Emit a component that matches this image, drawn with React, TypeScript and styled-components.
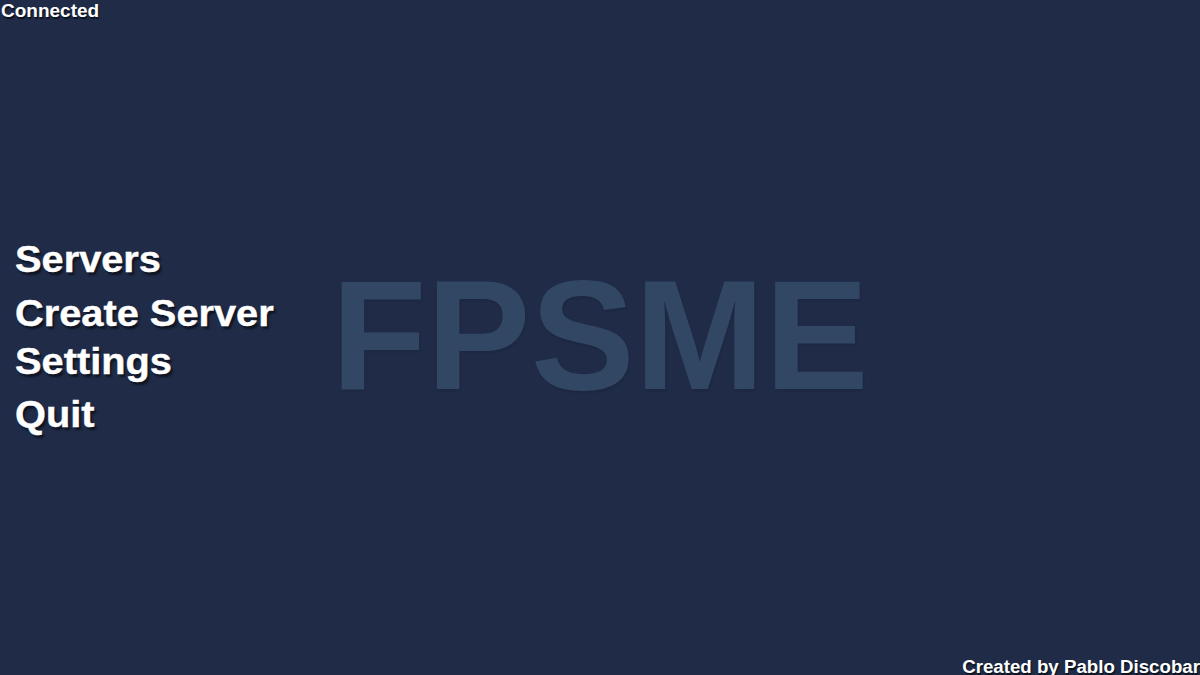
import React from "react";
import styled, { createGlobalStyle } from "styled-components";

const GlobalStyle = createGlobalStyle`
  html, body {
    margin: 0;
    padding: 0;
    background: #1f2b47;
    overflow: hidden;
  }
`;

const Screen = styled.div`
  width: 1200px;
  height: 675px;
  background: #1f2b47;
  display: grid;
  grid-template-rows: 22px 1fr 22px;
  font-family: "Liberation Sans", Arial, sans-serif;
  font-weight: bold;
  color: #ffffff;
`;

const Status = styled.div`
  font-size: 19px;
  line-height: 22px;
  padding-left: 1px;
  text-shadow: 1px 2px 1px rgba(0, 0, 0, 0.6);
`;

const Middle = styled.div`
  display: grid;
  grid-template-columns: 1fr auto 1fr;
  align-items: center;
`;

const Menu = styled.nav`
  display: flex;
  flex-direction: column;
  align-items: flex-start;
  padding-left: 15px;
`;

const MenuItem = styled.div<{ $gap: number }>`
  font-size: 37px;
  line-height: 48px;
  margin-top: ${(p) => p.$gap}px;
  white-space: nowrap;
  cursor: pointer;
  transform: scaleX(1.075);
  transform-origin: left center;
  -webkit-text-stroke: 0.4px #ffffff;
  text-shadow: 2px 3px 2px rgba(0, 0, 0, 0.55);
`;

const Title = styled.h1`
  margin: 0;
  padding-bottom: 6px;
  font-size: 156px;
  line-height: 1;
  color: #324763;
  text-shadow: 1px 2px 2px rgba(0, 0, 0, 0.08);
`;

const Footer = styled.div`
  display: flex;
  justify-content: flex-end;
  align-items: flex-end;
`;

const Credit = styled.div`
  font-size: 18.7px;
  line-height: 17px;
  text-shadow: 1px 2px 1px rgba(0, 0, 0, 0.6);
`;

const items = [
  { label: "Servers", gap: 0 },
  { label: "Create Server", gap: 6.5 },
  { label: "Settings", gap: 0 },
  { label: "Quit", gap: 5 },
];

export default function App() {
  return (
    <>
      <GlobalStyle />
      <Screen>
        <Status>Connected</Status>
        <Middle>
          <Menu>
            {items.map((item) => (
              <MenuItem key={item.label} $gap={item.gap}>
                {item.label}
              </MenuItem>
            ))}
          </Menu>
          <Title>FPSME</Title>
          <div />
        </Middle>
        <Footer>
          <Credit>Created by Pablo Discobar</Credit>
        </Footer>
      </Screen>
    </>
  );
}
